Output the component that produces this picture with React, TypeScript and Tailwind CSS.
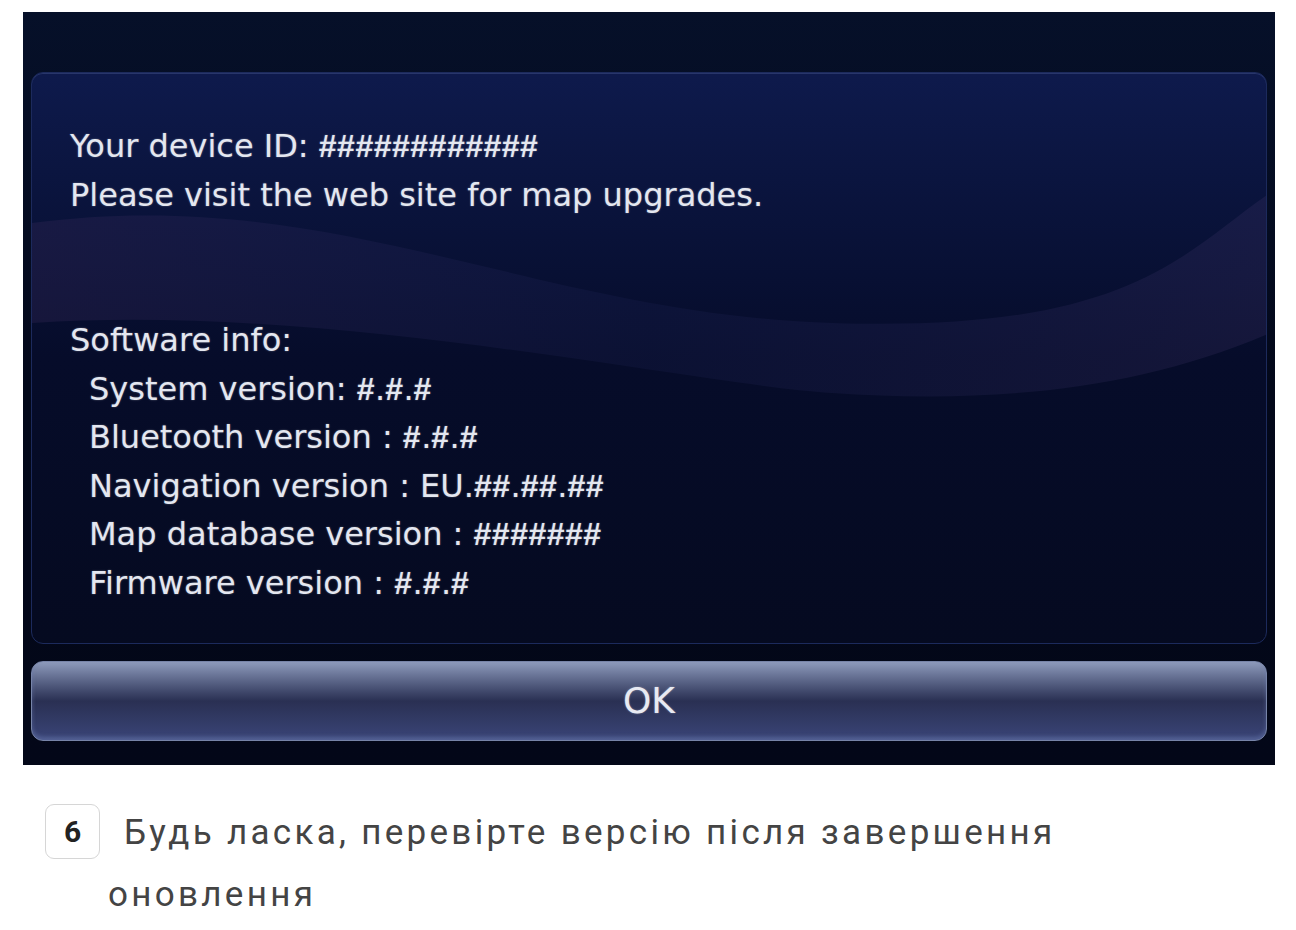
import React from "react";

const versions = [
  "System version: #.#.#",
  "Bluetooth version : #.#.#",
  "Navigation version : EU.##.##.##",
  "Map database version : #######",
  "Firmware version : #.#.#",
];

const screenFont = { fontFamily: '"DejaVu Sans", "Liberation Sans", sans-serif' };
const hashFont = { fontFamily: '"Liberation Sans", Arial, sans-serif' };

// the device draws "#" narrow and bold, so give those runs their own face
const Line = ({ text }: { text: string }) => {
  const parts = text.split(/(#+)/);
  return (
    <>
      {parts.map((p, i) =>
        p.startsWith("#") ? (
          <span key={i} className="font-bold tracking-[0.5px]" style={hashFont}>
            {p}
          </span>
        ) : (
          <span key={i}>{p}</span>
        )
      )}
    </>
  );
};

export default function App() {
  return (
    <div className="w-[1296px] h-[930px] bg-white overflow-hidden">
      <div className="pt-[12px] pl-[23px]">
        <div className="relative w-[1252px] h-[753px] bg-gradient-to-b from-[#061029] via-[#03081a] to-[#030718] px-[8px] pt-[60px] pb-[24px] flex flex-col overflow-hidden">
          {/* panel */}
          <div className="relative h-[574px] rounded-[12px] border border-[#1c2a5c] bg-gradient-to-b from-[#0e1a4c] via-[#060c2a] to-[#050a20] shadow-[inset_0_1px_0_rgba(120,140,200,0.25)] overflow-hidden">
            <svg
              className="absolute inset-0"
              width="1238"
              height="574"
              viewBox="0 0 1238 574"
              fill="none"
            >
              <defs>
                <linearGradient id="wave" x1="0" y1="0" x2="1" y2="0">
                  <stop offset="0" stopColor="#3a2a5a" stopOpacity="0.3" />
                  <stop offset="0.5" stopColor="#2a2f6a" stopOpacity="0.15" />
                  <stop offset="1" stopColor="#4a3a70" stopOpacity="0.22" />
                </linearGradient>
              </defs>
              <path
                d="M0 150 C 300 110, 500 240, 800 250 S 1150 180, 1238 120 L1238 260 C 1100 320, 950 330, 800 320 S 300 230, 0 250 Z"
                fill="url(#wave)"
              />
            </svg>
            <div
              className="relative pl-[38px] pt-[49px] text-[#e4e7f0] text-[32px] leading-[48.5px] [text-shadow:0_0_2px_rgba(255,255,255,0.35)]"
              style={screenFont}
            >
              <div>
                <Line text="Your device ID: ############" />
              </div>
              <div>Please visit the web site for map upgrades.</div>
              <div className="h-[97px]" />
              <div>Software info:</div>
              {versions.map((v) => (
                <div key={v} className="pl-[19px]">
                  <Line text={v} />
                </div>
              ))}
            </div>
          </div>
          {/* OK button */}
          <div className="mt-[17px] h-[80px] rounded-[12px] border border-[#7784a8] bg-gradient-to-b from-[#8e9bbc] via-[#2a3053] to-[#3a4578] flex items-center justify-center shadow-[inset_0_-3px_4px_rgba(110,125,180,0.5)]">
            <span
              className="text-[#e8eaf2] text-[36px] [text-shadow:0_0_2px_rgba(255,255,255,0.4)]"
              style={screenFont}
            >
              OK
            </span>
          </div>
        </div>
      </div>

      {/* caption */}
      <div
        className="mt-[37px] pl-[45px] pr-[40px] text-[#444] text-[35px] leading-[62px] tracking-[3.3px]"
        style={{ fontFamily: 'Roboto, "Noto Sans", sans-serif' }}
      >
        <span className="inline-flex items-center justify-center align-middle w-[55px] h-[55px] rounded-[9px] border border-[#d6d6d6] text-[#222] font-bold text-[30px] tracking-normal mr-[24px] relative -top-[3px]">
          6
        </span>
        <span>Будь ласка, перевірте версію після завершення</span>
        <div className="pl-[63px]">оновлення</div>
      </div>
    </div>
  );
}
